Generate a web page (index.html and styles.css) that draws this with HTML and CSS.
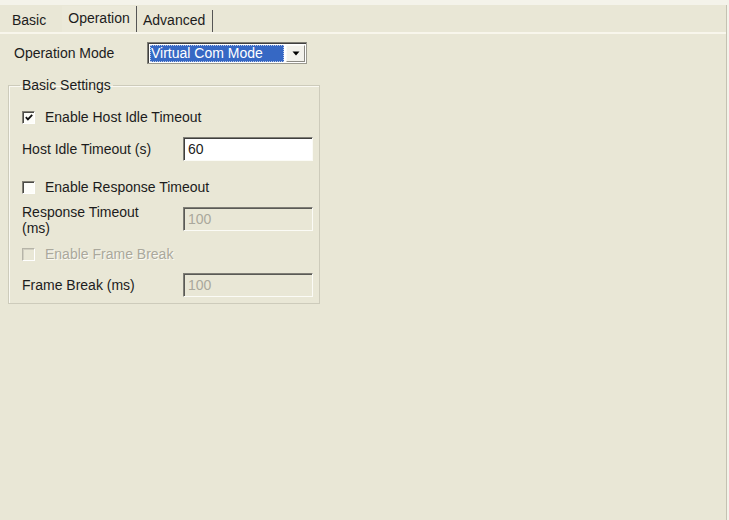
FILE: index.html
```html
<!DOCTYPE html>
<html>
<head>
<meta charset="utf-8">
<link rel="stylesheet" href="styles.css">
</head>
<body>
<div class="window">
  <div class="tabs">
    <div class="tab">Basic</div>
    <div class="tab active">Operation</div>
    <div class="tab last">Advanced</div>
  </div>
  <div class="panel">
    <div class="mode-row">
      <span class="label">Operation Mode</span>
      <div class="select">
        <span class="select-value">Virtual Com Mode</span>
        <span class="select-btn"><svg width="8" height="5" viewBox="0 0 8 5"><path d="M0.5 0.5 H7.5 L4 4.5 Z" fill="#000"/></svg></span>
      </div>
    </div>
    <fieldset class="group">
      <legend>Basic Settings</legend>
      <div class="row cb-row first">
        <span class="cb"><svg width="11" height="11" viewBox="0 0 11 11"><path d="M2 5 L4.3 7.5 L9 2.5" fill="none" stroke="#111" stroke-width="2"/></svg></span>
        <span class="cb-label">Enable Host Idle Timeout</span>
      </div>
      <div class="row field-row r2">
        <span class="flabel">Host Idle Timeout (s)</span>
        <span class="input">60</span>
      </div>
      <div class="row cb-row r3">
        <span class="cb"></span>
        <span class="cb-label">Enable Response Timeout</span>
      </div>
      <div class="row field-row r4">
        <span class="flabel two">Response Timeout<br>(ms)</span>
        <span class="input disabled">100</span>
      </div>
      <div class="row cb-row r5 off">
        <span class="cb dis"></span>
        <span class="cb-label">Enable Frame Break</span>
      </div>
      <div class="row field-row r6">
        <span class="flabel">Frame Break (ms)</span>
        <span class="input disabled">100</span>
      </div>
    </fieldset>
  </div>
</div>
</body>
</html>
```
FILE: styles.css
```css
html, body {
  margin: 0;
  padding: 0;
  background: #f4f3ea;
}
body {
  width: 729px;
  height: 520px;
  overflow: hidden;
  font-family: "Liberation Sans", Arial, sans-serif;
  font-size: 14px;
  color: #1c1c1c;
}
.window {
  width: 726px;
  height: 515px;
  margin-top: 5px;
  background: #e9e7d6;
  border-right: 1px solid #c4c2b2;
  border-bottom: 2px solid #f7f6ee;
  display: flex;
  flex-direction: column;
}
.tabs {
  height: 27px;
  display: flex;
  align-items: flex-end;
  padding-left: 6px;
  border-bottom: 2px solid #f8f6ec;
}
.tab {
  height: 22px;
  line-height: 20px;
  padding: 0 6px;
  box-sizing: border-box;
}
.tab:first-child {
  width: 56px;
  padding-left: 6px;
}
.tab.active {
  height: 26px;
  line-height: 24px;
  padding: 0 6px 0 6px;
  width: 75px;
  text-align: center;
  border-right: 1px solid #555;
  background: #ebe9d9;
}
.tab.last {
  width: 76px;
  padding-left: 6px;
  border-right: 1px solid #555;
}
.panel {
  flex: 1;
  padding: 8px 0 0 8px;
}
.mode-row {
  display: flex;
  align-items: center;
  height: 22px;
}
.mode-row .label {
  width: 139px;
  padding-left: 6px;
  box-sizing: border-box;
}
.select {
  width: 160px;
  height: 22px;
  box-sizing: border-box;
  border-top: 1px solid #7f7e76;
  border-left: 1px solid #7f7e76;
  border-right: 1px solid #9a998f;
  border-bottom: 1px solid #9a998f;
  box-shadow: inset 1px 1px 0 #404040;
  background: #fff;
  display: flex;
  align-items: stretch;
  padding: 2px 1px 1px 2px;
}
.select-value {
  flex: 1;
  background: #3668c4;
  color: #fff;
  line-height: 16px;
  padding-left: 1px;
  font-size: 14px;
  outline: 1px dotted #bcc8e6;
  outline-offset: -1px;
}
.select-btn {
  width: 19px;
  margin-left: 2px;
  background: #f3f2ec;
  box-sizing: border-box;
  border-top: 1px solid #fbfbf8;
  border-left: 1px solid #fbfbf8;
  border-right: 1px solid #8a8983;
  border-bottom: 1px solid #8a8983;
  display: flex;
  align-items: center;
  justify-content: center;
}
.group {
  margin: 13px 0 0 0;
  width: 311px;
  box-sizing: border-box;
  border: 1px solid #cdcbbb;
  box-shadow: 1px 1px 0 #faf9f2 inset;
  padding: 12px 6px 6px 13px;
}
.group legend {
  padding: 0 2px;
  margin-left: -2px;
  line-height: 16px;
}
.row {
  display: flex;
  align-items: center;
  height: 24px;
}
.r2 { margin-top: 8px; }
.r3 { margin-top: 14px; }
.r4 { margin-top: 8px; }
.r5 { margin-top: 11px; }
.r6 { margin-top: 7px; }
.cb {
  width: 13px;
  height: 13px;
  box-sizing: border-box;
  border-top: 1px solid #838176;
  border-left: 1px solid #838176;
  border-right: 1px solid #fff;
  border-bottom: 1px solid #fff;
  box-shadow: inset 1px 1px 0 #4a4a46;
  background: #fdfdf9;
  display: flex;
  align-items: center;
  justify-content: center;
}
.cb svg { margin: 1px 0 0 1px; }
.cb.dis {
  background: #e9e7d6;
  border-top-color: #b6b4a8;
  border-left-color: #b6b4a8;
  box-shadow: inset 1px 1px 0 #d1cfc1;
}
.cb-label {
  margin-left: 10px;
}
.off .cb-label {
  color: #aaa89c;
  text-shadow: 1px 1px 0 #fbfaf3;
}
.flabel {
  width: 161px;
  line-height: 15px;
}
.flabel.two {
  line-height: 16px;
  padding-top: 2px;
}
.input {
  width: 130px;
  height: 24px;
  box-sizing: border-box;
  border-top: 1px solid #7f7e76;
  border-left: 1px solid #7f7e76;
  border-right: 1px solid #fbfbf6;
  border-bottom: 1px solid #fbfbf6;
  box-shadow: inset 1px 1px 0 #3f3f3d;
  background: #fff;
  padding: 2px 4px;
  line-height: 18px;
}
.input.disabled {
  background: #e9e7d6;
  color: #aaa89c;
  box-shadow: inset 1px 1px 0 #5a5a56;
}
```
